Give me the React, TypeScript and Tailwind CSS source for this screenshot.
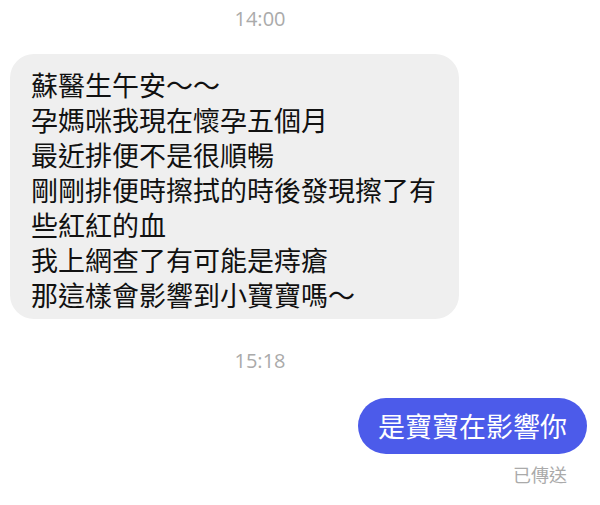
import React from 'react';

const lines = [
  '蘇醫生午安～～',
  '孕媽咪我現在懷孕五個月',
  '最近排便不是很順暢',
  '剛剛排便時擦拭的時後發現擦了有',
  '些紅紅的血',
  '我上網查了有可能是痔瘡',
  '那這樣會影響到小寶寶嗎～',
];

export default function App() {
  return (
    <div
      className="w-[600px] h-[505px] bg-white flex flex-col overflow-hidden"
      style={{ fontFamily: '"Noto Sans CJK TC", "Noto Sans", sans-serif' }}
    >
      <div
        className="w-[520px] pt-[7px] text-center text-[20px] leading-[24px] text-[#aaaaaa]"
        style={{ fontFamily: '"Open Sans", "Noto Sans", sans-serif' }}
      >
        14:00
      </div>

      <div className="mt-[23px] ml-[10px] w-fit rounded-[24px] bg-[#efefef] pl-[21px] pr-[23px] pt-[13px] pb-[7px] text-[27px] leading-[35px] text-[#111]">
        {lines.map((l) => (
          <div key={l}>{l}</div>
        ))}
      </div>

      <div
        className="w-[520px] mt-[30px] text-center text-[20px] leading-[24px] text-[#aaaaaa]"
        style={{ fontFamily: '"Open Sans", "Noto Sans", sans-serif' }}
      >
        15:18
      </div>

      <div className="mt-[25px] mr-[13px] self-end h-[56px] flex items-center rounded-full bg-[#4c5bea] px-[20px] text-[27px] text-white">
        是寶寶在影響你
      </div>

      <div className="mt-[9px] mr-[33px] self-end text-[18px] leading-[22px] text-[#aaaaaa]">
        已傳送
      </div>
    </div>
  );
}
